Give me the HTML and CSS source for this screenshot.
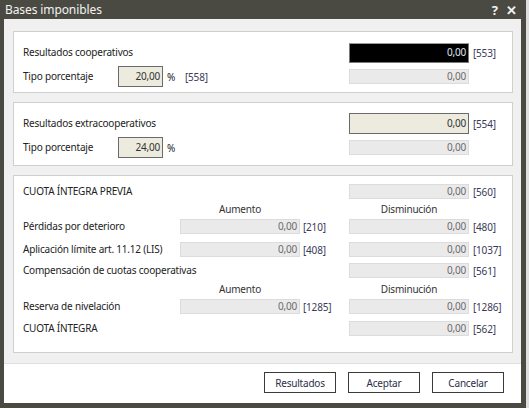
FILE: index.html
```html
<!DOCTYPE html>
<html lang="es">
<head>
<meta charset="utf-8">
<title>Bases imponibles</title>
<link rel="stylesheet" href="styles.css">
</head>
<body>
<div class="window">
  <div class="titlebar">
    <span class="title">Bases imponibles</span>
    <span class="tb-icons"><span class="help">?</span><span class="close">✕</span></span>
  </div>
  <div class="content">
    <div class="upper">
      <div class="group g1">
        <div class="row row-big">
          <div class="span3 lbl">Resultados cooperativos</div>
          <div class="inp inp-black">0,00</div>
          <div class="code">[553]</div>
        </div>
        <div class="row row-big gap3">
          <div class="span3 pct">
            <span class="pct-lbl lbl">Tipo porcentaje</span>
            <span class="inp inp-edit pct-inp">20,00</span>
            <span class="pct-sign">%</span>
            <span class="pct-code code">[558]</span>
          </div>
          <div class="inp inp-dis">0,00</div>
          <div class="code"></div>
        </div>
      </div>
      <div class="group g2">
        <div class="row row-big">
          <div class="span3 lbl">Resultados extracooperativos</div>
          <div class="inp inp-edit">0,00</div>
          <div class="code">[554]</div>
        </div>
        <div class="row row-big gap3">
          <div class="span3 pct">
            <span class="pct-lbl lbl">Tipo porcentaje</span>
            <span class="inp inp-edit pct-inp">24,00</span>
            <span class="pct-sign">%</span>
          </div>
          <div class="inp inp-dis">0,00</div>
          <div class="code"></div>
        </div>
      </div>
      <div class="group g3">
        <div class="row">
          <div class="span3 lbl">CUOTA ÍNTEGRA PREVIA</div>
          <div class="inp inp-dis">0,00</div>
          <div class="code">[560]</div>
        </div>
        <div class="row hdr">
          <div class="lbl"></div>
          <div class="hdr-txt">Aumento</div>
          <div></div>
          <div class="hdr-txt">Disminución</div>
          <div></div>
        </div>
        <div class="row">
          <div class="lbl">Pérdidas por deterioro</div>
          <div class="inp inp-dis">0,00</div>
          <div class="code code-mid">[210]</div>
          <div class="inp inp-dis">0,00</div>
          <div class="code">[480]</div>
        </div>
        <div class="row mt8">
          <div class="lbl">Aplicación límite art. 11.12 (LIS)</div>
          <div class="inp inp-dis">0,00</div>
          <div class="code code-mid">[408]</div>
          <div class="inp inp-dis">0,00</div>
          <div class="code">[1037]</div>
        </div>
        <div class="row mt6">
          <div class="span3 lbl">Compensación de cuotas cooperativas</div>
          <div class="inp inp-dis">0,00</div>
          <div class="code">[561]</div>
        </div>
        <div class="row hdr hdr2">
          <div class="lbl"></div>
          <div class="hdr-txt">Aumento</div>
          <div></div>
          <div class="hdr-txt">Disminución</div>
          <div></div>
        </div>
        <div class="row">
          <div class="lbl">Reserva de nivelación</div>
          <div class="inp inp-dis">0,00</div>
          <div class="code code-mid">[1285]</div>
          <div class="inp inp-dis">0,00</div>
          <div class="code">[1286]</div>
        </div>
        <div class="row mt7">
          <div class="span3 lbl">CUOTA ÍNTEGRA</div>
          <div class="inp inp-dis">0,00</div>
          <div class="code">[562]</div>
        </div>
      </div>
    </div>
    <div class="footer">
      <button class="btn" type="button">Resultados</button>
      <button class="btn" type="button">Aceptar</button>
      <button class="btn" type="button">Cancelar</button>
    </div>
  </div>
</div>
</body>
</html>
```

FILE: styles.css
```css
html, body {
  margin: 0;
  padding: 0;
}
body {
  width: 529px;
  height: 408px;
  overflow: hidden;
  background: #dedede;
  font-family: "Noto Sans", "Open Sans", sans-serif;
  font-size: 10px;
  letter-spacing: -0.2px;
  color: #222;
}
.window {
  width: 517px;
  height: 403px;
  border-left: 4px solid #4a4a42;
  border-right: 5px solid #4a4a42;
  border-bottom: 5px solid #4a4a42;
  display: flex;
  flex-direction: column;
}
.titlebar {
  height: 19px;
  flex: none;
  margin-left: -4px;
  margin-right: -5px;
  background: #4a4a42;
  display: flex;
  align-items: center;
  justify-content: space-between;
  color: #f2f2f2;
}
.title {
  font-size: 12px;
  letter-spacing: -0.1px;
  padding-left: 5px;
  line-height: 19px;
}
.tb-icons {
  display: flex;
  gap: 8px;
  padding-right: 9px;
  font-size: 13px;
  font-weight: bold;
  letter-spacing: 0;
}
.content {
  flex: 1;
  display: flex;
  flex-direction: column;
  background: #f0f0f0;
}
.upper {
  flex: none;
  padding: 12px 8px 0 9px;
  height: 332px;
  border-bottom: 1px solid #dfdfdf;
}
.group {
  background: #fff;
  border: 1px solid #cfcfcf;
  padding: 0 0 0 9px;
  box-sizing: border-box;
  width: 500px;
}
.g1 {
  height: 62px;
  padding-top: 10px;
  margin-bottom: 9px;
}
.g2 {
  height: 64px;
  padding-top: 10px;
  margin-bottom: 9px;
}
.g3 {
  height: 178px;
  padding-top: 8px;
}
.row {
  display: grid;
  grid-template-columns: 157px 120px 49px 120px 1fr;
  height: 15px;
  align-items: center;
}
.row-big {
  height: 21px;
}
.gap3 { margin-top: 3px; }
.mt8 { margin-top: 8px; }
.mt6 { margin-top: 6px; }
.mt7 { margin-top: 7px; }
.hdr { height: 20px; }
.hdr2 { height: 21px; }
.span3 {
  grid-column: 1 / 4;
}
.lbl {
  white-space: nowrap;
  line-height: 15px;
}
.hdr-txt {
  text-align: center;
  color: #333;
}
.inp {
  box-sizing: border-box;
  height: 15px;
  line-height: 13px;
  text-align: right;
  padding-right: 2px;
  border: 1px solid #dcdcdc;
  background: #eaeaea;
  color: #6a6a6a;
}
.inp-black {
  height: 20px;
  line-height: 17px;
  background: #000;
  border: 1px solid #7a7a7a;
  border-top-color: #9a9a9a;
  color: #dfe7f5;
}
.row-big .inp-edit {
  height: 21px;
  line-height: 19px;
}
.inp-edit {
  background: #ecebde;
  border: 1px solid #6a6a6a;
  color: #333;
}
.code {
  padding-left: 4px;
  color: #3a3a58;
  white-space: nowrap;
}
.code-mid {
  padding-left: 3px;
}
.pct {
  display: flex;
  align-items: center;
  height: 21px;
}
.pct-lbl {
  width: 95px;
}
.pct-inp {
  display: block;
  width: 45px;
}
.pct-sign {
  padding-left: 4px;
  width: 18px;
}
.pct-code {
  padding-left: 0;
}
.footer {
  flex: 1;
  background: #fff;
  display: flex;
  justify-content: flex-end;
  align-items: flex-start;
  gap: 12px;
  padding: 8px 17px 0 0;
}
.btn {
  width: 72px;
  height: 21px;
  background: #fff;
  border: 1px solid #3a3a3a;
  font-family: "Noto Sans", "Open Sans", sans-serif;
  font-size: 10px;
  letter-spacing: -0.2px;
  color: #2d2d4a;
  padding: 0;
}
```
